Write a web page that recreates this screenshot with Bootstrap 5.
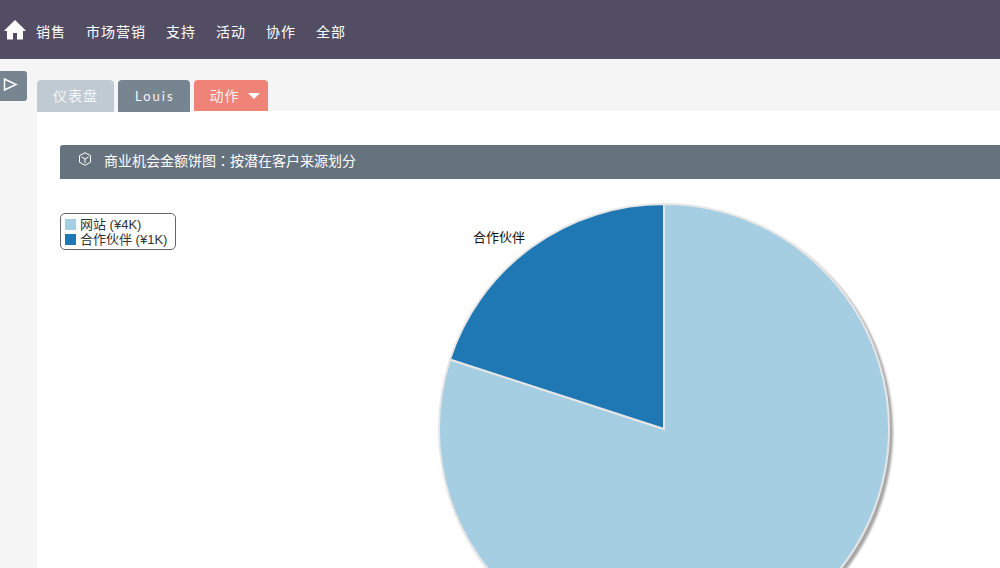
<!DOCTYPE html>
<html lang="zh-CN">
<head>
<meta charset="utf-8">
<meta name="viewport" content="width=device-width, initial-scale=1">
<title>仪表盘</title>
<link href="https://cdn.jsdelivr.net/npm/bootstrap@5.3.0/dist/css/bootstrap.min.css" rel="stylesheet">
<style>
  html { scrollbar-width: none; }
  ::-webkit-scrollbar { display: none; }
  body { background: #f5f5f5; font: 14px/20px Lato, "Noto Sans CJK SC", sans-serif; }
  .topbar { background: #534d64; height: 59px; padding: 4px 0 0 4px; }
  .topbar .nav-link { color: #fff; letter-spacing: 1px; padding: 0 10px; line-height: 20px; }
  .main-area { padding-top: 12px; }
  .side-toggle { width: 27px; height: 30px; background: #778591; border-radius: 0 3px 3px 0; }
  .dash { margin-left: 10px; min-width: 0; }
  .dash-tabs { gap: 4px; padding-top: 9px; height: 40px; }
  .tab-btn { border: 0; color: #f5f5f5; letter-spacing: 1px; height: 32px; padding: 0 16px; border-radius: 4px 4px 0 0; background: #778591; }
  .tab-latin { font-size: 13px; letter-spacing: 2px; padding: 0 15px 0 17px; }
  .tab-pale { background: #bfcad3; }
  .tab-action { background: #f08377; height: 31px; padding: 0 8px 0 16px; }
  .sheet { background: #fff; padding: 34px 0 20px 23px; min-height: 457px; }
  .panel-title { background: #66727e; color: #fff; height: 34px; padding: 0 18px; border-radius: 3px 0 0 0; font-size: 14px; line-height: 20px; gap: 12px; }
  .panel-title > span { padding-bottom: 3px; }
  .panel-title svg { margin-bottom: 6px; }
  .mid-colon { font-family: "Noto Sans CJK TC", sans-serif; }
  .legend-box { margin: 34px 0 0; padding: 3px 4px 2px; border: 1px solid #666; border-radius: 5px; color: #333; font: 13px/15px "Liberation Sans", "Noto Sans CJK SC", sans-serif; width: 116px; white-space: nowrap; }
  .legend-box li { gap: 4px; }
  .swatch { width: 11px; height: 11px; }
  .site { background: #a6cee3; }
  .partner { background: #1f78b4; }
  .chart { padding: 21px 0 0 152px; }
  .chart svg { overflow: visible; }
  .chart text { font: 13px "Liberation Sans", "Noto Sans CJK SC", sans-serif; fill: #111; }
  .pie { filter: drop-shadow(3px 3px 1px rgba(0, 0, 0, .35)); }
</style>
</head>
<body>
<nav class="topbar d-flex align-items-center" aria-label="主导航">
  <a href="#" class="d-flex mb-1" aria-label="首页">
    <svg width="22" height="22" viewBox="0 0 22 22" fill="#fff"><path d="M11 1 .5 11.200V12H3v8.500h6V14h4v6.500h6V12h2.500v-.8z"/></svg>
  </a>
  <ul class="nav flex-nowrap">
    <li class="nav-item"><a class="nav-link" href="#">销售</a></li>
    <li class="nav-item"><a class="nav-link" href="#">市场营销</a></li>
    <li class="nav-item"><a class="nav-link" href="#">支持</a></li>
    <li class="nav-item"><a class="nav-link" href="#">活动</a></li>
    <li class="nav-item"><a class="nav-link" href="#">协作</a></li>
    <li class="nav-item"><a class="nav-link" href="#">全部</a></li>
  </ul>
</nav>
<div class="main-area d-flex align-items-start">
  <button type="button" class="side-toggle btn p-0 border-0 d-flex align-items-center flex-shrink-0" aria-label="展开侧栏">
    <svg width="20" height="26" viewBox="0 0 20 26" fill="none" stroke="#fff" stroke-width="1.500"><path d="M4.500 6v11l11.500-5.500z"/></svg>
  </button>
  <main class="dash flex-grow-1">
    <div class="dash-tabs d-flex align-items-start">
      <button type="button" class="tab-btn tab-pale">仪表盘</button>
      <button type="button" class="tab-btn tab-latin">Louis</button>
      <button type="button" class="tab-btn tab-action d-flex align-items-center gap-2">动作
        <svg width="12" height="6" viewBox="0 0 12 6" fill="#fff"><path d="M0 0h12L6 6z"/></svg>
      </button>
    </div>
    <section class="sheet">
      <h1 class="panel-title d-flex align-items-center fw-normal mb-0">
        <svg width="14" height="14" viewBox="0 0 14 14" fill="none" stroke="#fff" stroke-linejoin="round"><path d="M7 .7 12.500 3.700v6.500L7 13.300 1.500 10.200V3.700zM3.500 5 7 7l3.500-2M7 7v4"/></svg>
        <span>商业机会金额饼图<span class="mid-colon" lang="zh-TW">：</span>按潜在客户来源划分</span>
      </h1>
      <div class="d-flex align-items-start">
        <ul class="legend-box list-unstyled flex-shrink-0">
          <li class="d-flex align-items-center"><span class="swatch site"></span>网站 (¥4K)</li>
          <li class="d-flex align-items-center"><span class="swatch partner"></span>合作伙伴 (¥1K)</li>
        </ul>
        <div class="chart flex-grow-1 text-center">
          <svg width="460" height="460" viewBox="-230 -229 460 460" role="img" aria-label="商业机会金额饼图">
            <g class="pie" stroke="#e6e6e6" stroke-width="2">
              <path fill="#a6cee3" d="M0 0V-225A225 225 0 1 1-214-69.500Z"/>
              <path fill="#1f78b4" d="M0 0-214-69.500A225 225 0 0 1 0-225Z"/>
            </g>
            <text x="-191" y="-187">合作伙伴</text>
          </svg>
        </div>
      </div>
    </section>
  </main>
</div>
<script src="https://cdn.jsdelivr.net/npm/bootstrap@5.3.0/dist/js/bootstrap.bundle.min.js"></script>
</body>
</html>
